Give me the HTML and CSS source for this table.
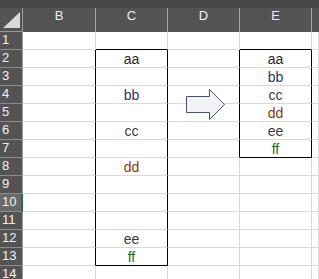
FILE: index.html
```html
<!DOCTYPE html>
<html>
<head>
<meta charset="utf-8">
<link rel="stylesheet" href="styles.css">
</head>
<body>
<div class="sheet">
  <div class="strip"></div>
  <div class="corner"><span class="tri"></span></div>
  <div class="ch">B</div><div class="ch">C</div><div class="ch">D</div><div class="ch">E</div><div class="ch last"></div>

  <div class="rh">1</div><div class="c"></div><div class="c eb"></div><div class="c"></div><div class="c eb"></div><div class="c"></div>
  <div class="rh">2</div><div class="c er"></div><div class="c er t-a">aa</div><div class="c er"></div><div class="c er t-a">aa</div><div class="c"></div>
  <div class="rh">3</div><div class="c er"></div><div class="c er"></div><div class="c er"></div><div class="c er t-b">bb</div><div class="c"></div>
  <div class="rh">4</div><div class="c er"></div><div class="c er t-b">bb</div><div class="c er"></div><div class="c er t-c">cc</div><div class="c"></div>
  <div class="rh">5</div><div class="c er"></div><div class="c er"></div><div class="c er"></div><div class="c er t-d">dd</div><div class="c"></div>
  <div class="rh">6</div><div class="c er"></div><div class="c er t-c">cc</div><div class="c er"></div><div class="c er t-e">ee</div><div class="c"></div>
  <div class="rh">7</div><div class="c er"></div><div class="c er"></div><div class="c er"></div><div class="c er eb t-f">ff</div><div class="c"></div>
  <div class="rh">8</div><div class="c er"></div><div class="c er t-d">dd</div><div class="c"></div><div class="c"></div><div class="c"></div>
  <div class="rh">9</div><div class="c er"></div><div class="c er"></div><div class="c"></div><div class="c"></div><div class="c"></div>
  <div class="rh sel">10</div><div class="c er"></div><div class="c er"></div><div class="c"></div><div class="c"></div><div class="c"></div>
  <div class="rh">11</div><div class="c er"></div><div class="c er"></div><div class="c"></div><div class="c"></div><div class="c"></div>
  <div class="rh">12</div><div class="c er"></div><div class="c er t-e">ee</div><div class="c"></div><div class="c"></div><div class="c"></div>
  <div class="rh">13</div><div class="c er"></div><div class="c er eb t-f">ff</div><div class="c"></div><div class="c"></div><div class="c"></div>
  <div class="rh">14</div><div class="c"></div><div class="c"></div><div class="c"></div><div class="c"></div><div class="c"></div>

  <svg class="arrow" width="40" height="32" viewBox="0 0 40 32">
    <path d="M0.5 7.5 H23.5 V0.5 L38.5 15.5 L23.5 30.5 V23.5 H0.5 Z" fill="#f2f2f2" stroke="#44546a" stroke-width="1"/>
  </svg>
</div>
</body>
</html>
```
FILE: styles.css
```css
html, body {
  margin: 0;
  padding: 0;
  background: #ffffff;
  overflow: hidden;
}
body {
  width: 319px;
  height: 279px;
  font-family: "Liberation Sans", Arial, sans-serif;
}
.sheet {
  position: relative;
  display: grid;
  grid-template-columns: 23px 73px 72px 72px 72px 7px;
  grid-template-rows: 8px 24px repeat(14, 18px);
}
.strip {
  grid-column: 1 / -1;
  background: #464646;
}
.corner {
  background: #545454;
  border-right: 1px solid #9a9a9a;
  border-bottom: 1px solid #9a9a9a;
  display: flex;
  align-items: flex-end;
  justify-content: flex-end;
  padding: 0 2px 3px 0;
}
.tri {
  width: 0;
  height: 0;
  border-left: 17px solid transparent;
  border-bottom: 16px solid #d9d9d9;
}
.ch {
  background: #545454;
  border-right: 1px solid #a6a6a6;
  color: #ececec;
  font-size: 13px;
  line-height: 15px;
  text-align: center;
}
.ch.last {
  border-right: none;
}
.rh {
  background: #545454;
  border-right: 1px solid #9a9a9a;
  border-bottom: 1px solid #8a8a8a;
  color: #f0f0f0;
  font-size: 13px;
  line-height: 13px;
  padding-left: 2px;
  padding-top: 1px;
}
.rh.sel {
  background: #6a6a6a;
  border-right: 2px solid #217346;
}
.c {
  border-right: 1px solid #dadada;
  border-bottom: 1px solid #dadada;
  font-size: 14px;
  line-height: 17px;
  padding-top: 1px;
  text-align: center;
}
.c.er {
  border-right-color: #000000;
}
.c.eb {
  border-bottom-color: #000000;
}
.t-a { color: #262626; }
.t-b { color: #1f3864; }
.t-c { color: #333f50; }
.t-d { color: #843c0c; }
.t-e { color: #3a3a3a; }
.t-f { color: #1a6b1a; }
.arrow {
  position: absolute;
  left: 186px;
  top: 89px;
}
```
